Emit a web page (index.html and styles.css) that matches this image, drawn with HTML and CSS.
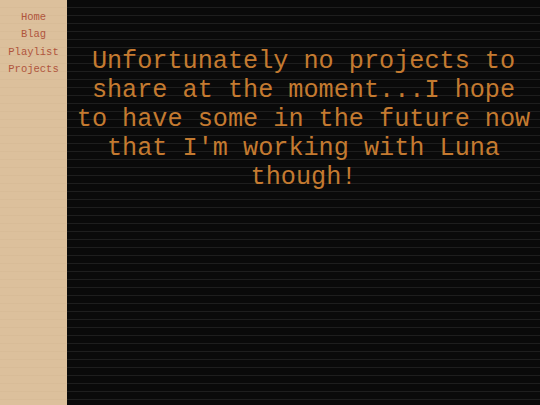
FILE: index.html
```html
<!DOCTYPE html>
<html>
<head>
<meta charset="utf-8">
<link rel="stylesheet" href="styles.css">
</head>
<body>
<div class="page">
  <nav class="sidebar">
    <a href="#" class="nav-link">Home</a>
    <a href="#" class="nav-link">Blag</a>
    <a href="#" class="nav-link">Playlist</a>
    <a href="#" class="nav-link">Projects</a>
  </nav>
  <main class="content">
    <p class="message">Unfortunately no projects to share at the moment...I hope to have some in the future now that I'm working with Luna though!</p>
  </main>
</div>
</body>
</html>
```
FILE: styles.css
```css
html, body {
  margin: 0;
  padding: 0;
  height: 100%;
}
body {
  font-family: "Liberation Mono", "Courier New", monospace;
  background: #0b0b0b;
}
.page {
  display: flex;
  min-height: 405px;
}
.sidebar {
  width: 67px;
  flex: none;
  background-color: #dcc09c;
  background-image: repeating-linear-gradient(to bottom, rgba(255,255,255,0) 0px, rgba(255,255,255,0) 7px, rgba(190,160,120,0.12) 7px, rgba(190,160,120,0.12) 8px);
  display: flex;
  flex-direction: column;
  align-items: center;
  padding-top: 9px;
}
.nav-link {
  color: #b0553c;
  text-decoration: none;
  font-size: 10.5px;
  line-height: 17.3px;
}
.content {
  flex: 1;
  background-color: #0a0a0a;
  background-image: repeating-linear-gradient(to bottom, rgba(0,0,0,0) 0px, rgba(0,0,0,0) 7px, #1e1e1e 7px, #1e1e1e 8px);
  padding: 47px 6px 0 6px;
}
.message {
  margin: 0;
  color: #c47a30;
  font-size: 25.2px;
  line-height: 29px;
  text-align: center;
}
```
